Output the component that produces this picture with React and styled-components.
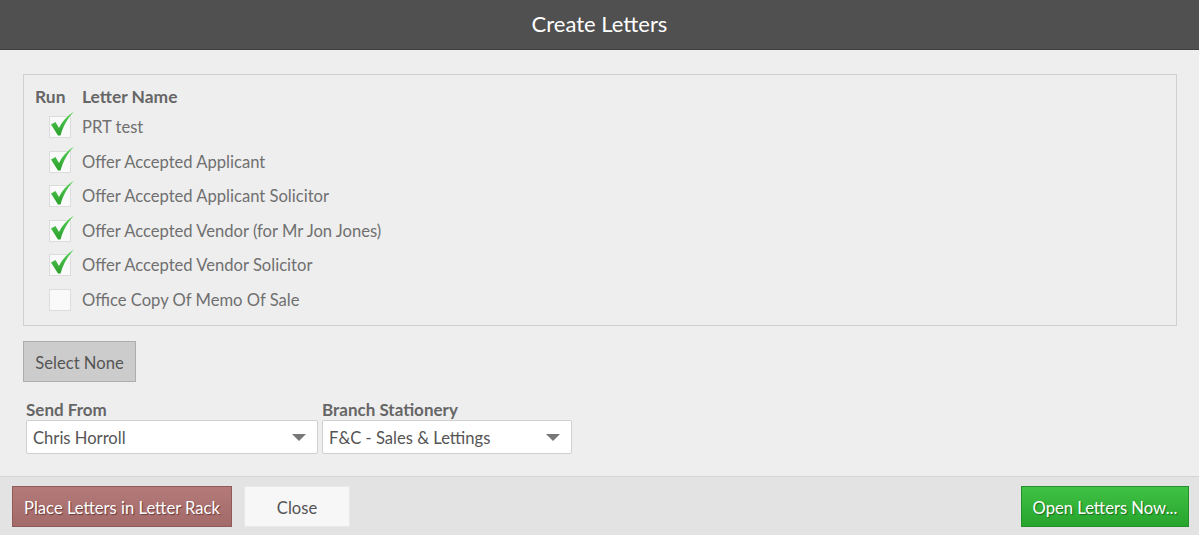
import styled, { createGlobalStyle } from "styled-components";

const GlobalStyle = createGlobalStyle`
  html, body {
    margin: 0;
    padding: 0;
    background: #eeeeee;
  }
  body {
    font-family: "Segoe UI", Lato, "Noto Sans", sans-serif;
    color: #666;
  }
`;

const letters = [
  { name: "PRT test", run: true },
  { name: "Offer Accepted Applicant", run: true },
  { name: "Offer Accepted Applicant Solicitor", run: true },
  { name: "Offer Accepted Vendor (for Mr Jon Jones)", run: true },
  { name: "Offer Accepted Vendor Solicitor", run: true },
  { name: "Office Copy Of Memo Of Sale", run: false },
];

function Tick() {
  return (
    <TickSvg viewBox="0 0 30 30" width="30" height="30">
      <defs>
        <linearGradient id="tickGrad" x1="0" y1="0" x2="0" y2="1">
          <stop offset="0" stopColor="#5ad35a" />
          <stop offset="1" stopColor="#2a9e2a" />
        </linearGradient>
      </defs>
      <path
        d="M4 16.5 L8.5 14 L12 20 C15 13.5 20 8 27 3.5 C21 10 16.5 17 13.5 27.5 L11 27.5 Z"
        fill="url(#tickGrad)"
      />
    </TickSvg>
  );
}

export default function App() {
  return (
    <Dialog>
      <GlobalStyle />
      <Header>Create Letters</Header>
      <Body>
        <Panel>
          <HeadRow>
            <RunHead>Run</RunHead>
            <span>Letter Name</span>
          </HeadRow>
          <Rows>
            {letters.map(l => (
              <LetterRow key={l.name}>
                <CheckCell>
                  <Box>{l.run && <Tick />}</Box>
                </CheckCell>
                <span>{l.name}</span>
              </LetterRow>
            ))}
          </Rows>
        </Panel>
        <GreyButton>Select None</GreyButton>
        <Fields>
          <Field>
            <FieldLabel>Send From</FieldLabel>
            <Select width={292}>
              <span>Chris Horroll</span>
              <Caret />
            </Select>
          </Field>
          <Field>
            <FieldLabel>Branch Stationery</FieldLabel>
            <Select width={250}>
              <span>F&amp;C - Sales &amp; Lettings</span>
              <Caret />
            </Select>
          </Field>
        </Fields>
      </Body>
      <Footer>
        <RackButton>Place Letters in Letter Rack</RackButton>
        <CloseButton>Close</CloseButton>
        <Spacer />
        <OpenButton>Open Letters Now...</OpenButton>
      </Footer>
    </Dialog>
  );
}

const Dialog = styled.div`
  width: 1199px;
  height: 535px;
  display: flex;
  flex-direction: column;
  background: #eeeeee;
  overflow: hidden;
`;

const Header = styled.div`
  height: 50px;
  flex-shrink: 0;
  background: #505050;
  border-bottom: 1px solid #3f3f3f;
  color: #fff;
  font-size: 22px;
  display: flex;
  align-items: center;
  justify-content: center;
  padding-bottom: 2px;
  box-sizing: border-box;
`;

const Body = styled.div`
  flex: 1;
  padding: 24px 22px 0 23px;
  border-bottom: 1px solid #d4d4d4;
`;

const Panel = styled.div`
  border: 1px solid #d0d0d0;
  padding: 11px 0 8px 11px;
`;

const HeadRow = styled.div`
  display: flex;
  font-weight: bold;
  font-size: 17.4px;
  height: 21px;
  align-items: center;
  color: #666;
`;

const RunHead = styled.span`
  width: 47px;
`;

const Rows = styled.div`
  margin-top: 3px;
`;

const LetterRow = styled.div`
  display: flex;
  align-items: center;
  height: 34.5px;
  font-size: 16.6px;
  color: #707070;
`;

const CheckCell = styled.div`
  width: 47px;
  display: flex;
  justify-content: center;
`;

const Box = styled.div`
  width: 20px;
  height: 20px;
  border: 1px solid #dcdcdc;
  background: #fafafa;
  position: relative;
  margin-left: 2px;
`;

const TickSvg = styled.svg`
  position: absolute;
  left: -3px;
  top: -9px;
`;

const GreyButton = styled.div`
  margin-top: 15px;
  width: 113px;
  height: 41px;
  box-sizing: border-box;
  background: #cccccc;
  border: 1px solid #adadad;
  display: flex;
  align-items: center;
  justify-content: center;
  padding-top: 2px;
  font-size: 16.6px;
  color: #555;
`;

const Fields = styled.div`
  display: flex;
  gap: 4px;
  margin-top: 18px;
  padding-left: 3px;
`;

const Field = styled.div`
  display: flex;
  flex-direction: column;
`;

const FieldLabel = styled.div`
  font-weight: bold;
  font-size: 17px;
  color: #666;
  height: 20px;
  line-height: 20px;
`;

const Select = styled.div`
  width: ${p => p.width}px;
  height: 34px;
  box-sizing: border-box;
  background: #fff;
  border: 1px solid #cfcfcf;
  border-radius: 2px;
  display: flex;
  align-items: center;
  justify-content: space-between;
  padding: 2px 11px 0 6px;
  font-size: 16.6px;
  color: #555;
`;

const Caret = styled.span`
  width: 0;
  height: 0;
  margin-top: -2px;
  border-left: 7px solid transparent;
  border-right: 7px solid transparent;
  border-top: 7px solid #777;
`;

const Footer = styled.div`
  height: 58px;
  flex-shrink: 0;
  background: #e3e3e3;
  display: flex;
  align-items: center;
  padding: 0 10px 0 12px;
  gap: 12px;
`;

const Spacer = styled.div`
  flex: 1;
`;

const FooterButton = styled.div`
  height: 41px;
  box-sizing: border-box;
  display: flex;
  align-items: center;
  justify-content: center;
  padding-top: 3px;
  font-size: 16.6px;
`;

const RackButton = styled(FooterButton)`
  width: 220px;
  background: linear-gradient(#b47a7a, #a36a6a);
  border: 1px solid #8e5a5a;
  color: #fff;
  text-shadow: 1px 1px 1px #6a3a3a;
`;

const CloseButton = styled(FooterButton)`
  width: 106px;
  background: #f7f7f7;
  border: 1px solid #e8e8e8;
  color: #555;
`;

const OpenButton = styled(FooterButton)`
  width: 168px;
  background: linear-gradient(#3fc245, #27a42c);
  border: 1px solid #25902a;
  color: #fff;
  text-shadow: 1px 1px 1px #1a6a1e;
`;
